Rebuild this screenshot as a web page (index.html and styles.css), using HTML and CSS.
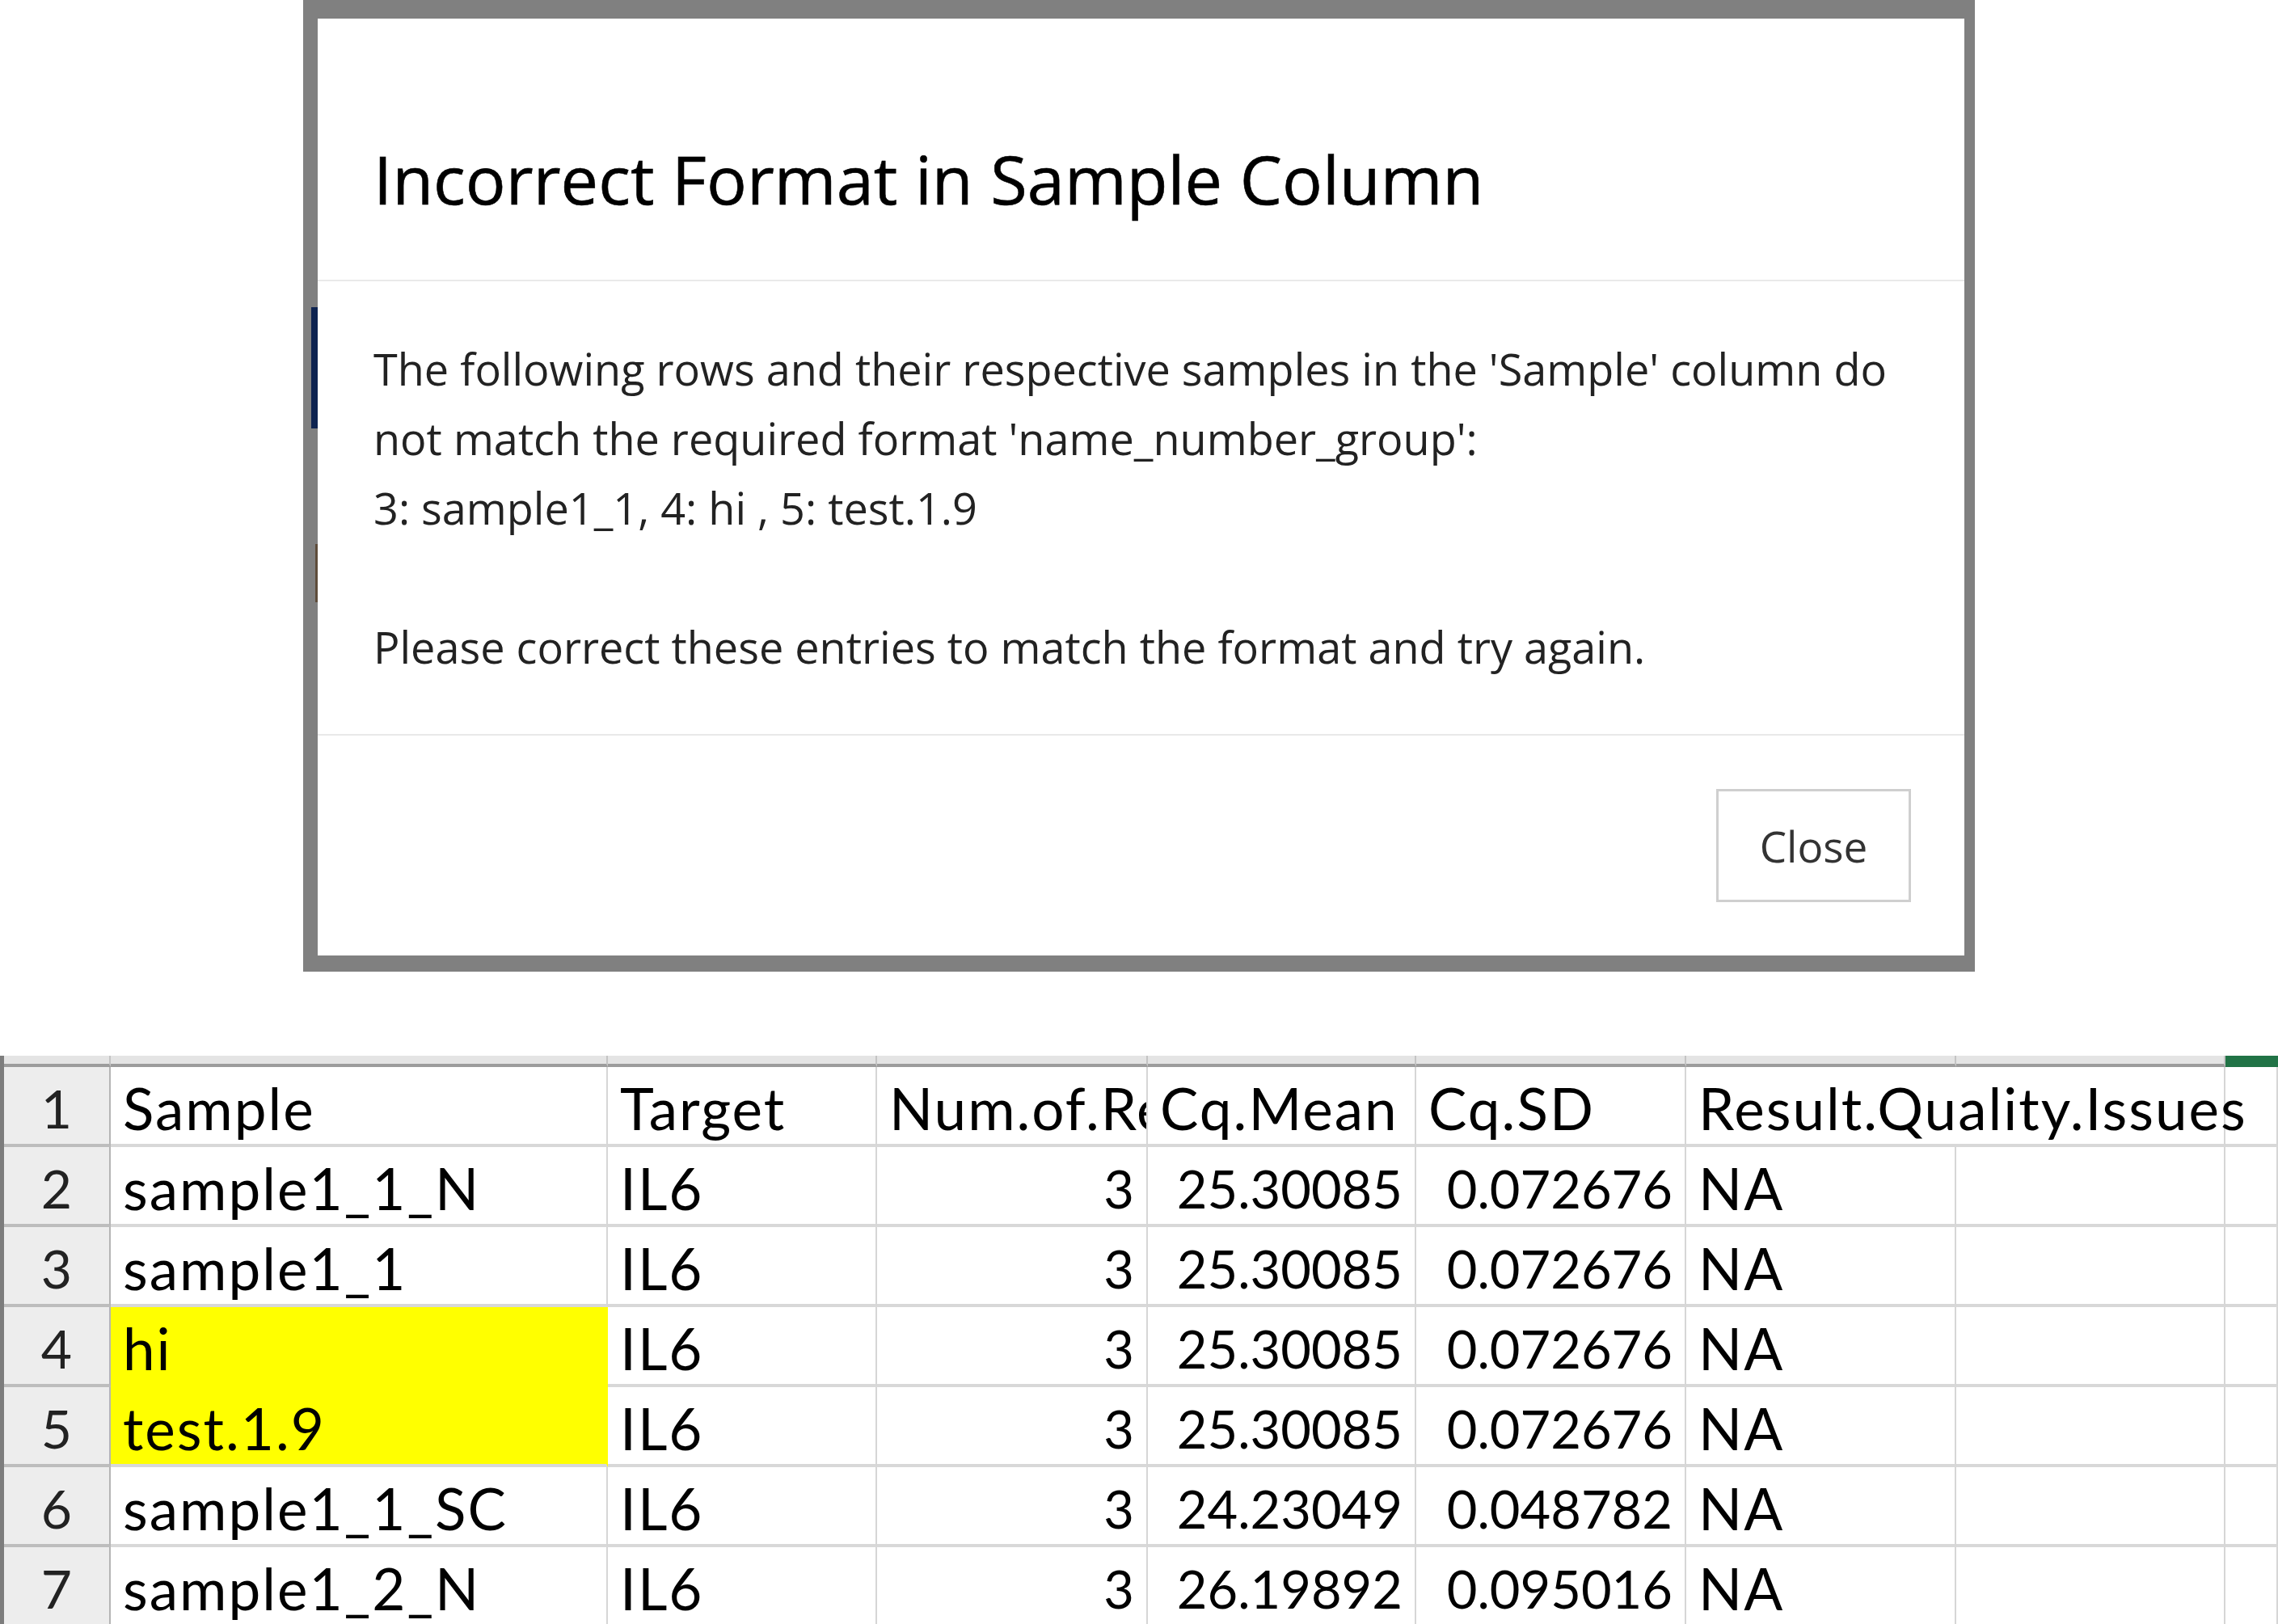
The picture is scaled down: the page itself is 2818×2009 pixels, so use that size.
FILE: index.html
```html
<!DOCTYPE html>
<html lang="en">
<head>
<meta charset="utf-8">
<title>Incorrect Format in Sample Column</title>
<link rel="stylesheet" href="styles.css">
</head>
<body>
<div class="modal-frame">
  <span class="peek peek-blue"></span>
  <span class="peek peek-brown"></span>
  <div class="modal">
    <div class="modal-header">
      <h5 class="modal-title">Incorrect Format in Sample Column</h5>
    </div>
    <div class="modal-body">
      <p>The following rows and their respective samples in the 'Sample' column do<br>not match the required format 'name_number_group':<br>3: sample1_1, 4: hi , 5: test.1.9<br><br>Please correct these entries to match the format and try again.</p>
    </div>
    <div class="modal-footer">
      <button class="btn" type="button">Close</button>
    </div>
  </div>
</div>

<div class="sheet">
  <div class="ch corner"></div><div class="ch"></div><div class="ch"></div><div class="ch"></div><div class="ch"></div><div class="ch"></div><div class="ch"></div><div class="ch"></div><div class="ch ch-sel"></div>

  <div class="rh">1</div><div class="c">Sample</div><div class="c">Target</div><div class="c clip">Num.of.Replicates</div><div class="c">Cq.Mean</div><div class="c">Cq.SD</div><div class="c span2">Result.Quality.Issues</div><div class="c"></div>

  <div class="rh">2</div><div class="c">sample1_1_N</div><div class="c">IL6</div><div class="c n">3</div><div class="c n">25.30085</div><div class="c n">0.072676</div><div class="c">NA</div><div class="c"></div><div class="c"></div>

  <div class="rh">3</div><div class="c">sample1_1</div><div class="c">IL6</div><div class="c n">3</div><div class="c n">25.30085</div><div class="c n">0.072676</div><div class="c">NA</div><div class="c"></div><div class="c"></div>

  <div class="rh">4</div><div class="c hl hl-top">hi</div><div class="c">IL6</div><div class="c n">3</div><div class="c n">25.30085</div><div class="c n">0.072676</div><div class="c">NA</div><div class="c"></div><div class="c"></div>

  <div class="rh">5</div><div class="c hl">test.1.9</div><div class="c">IL6</div><div class="c n">3</div><div class="c n">25.30085</div><div class="c n">0.072676</div><div class="c">NA</div><div class="c"></div><div class="c"></div>

  <div class="rh">6</div><div class="c">sample1_1_SC</div><div class="c">IL6</div><div class="c n">3</div><div class="c n">24.23049</div><div class="c n">0.048782</div><div class="c">NA</div><div class="c"></div><div class="c"></div>

  <div class="rh">7</div><div class="c">sample1_2_N</div><div class="c">IL6</div><div class="c n">3</div><div class="c n">26.19892</div><div class="c n">0.095016</div><div class="c">NA</div><div class="c"></div><div class="c"></div>
</div>
</body>
</html>
```

FILE: styles.css
```css
html, body {
  margin: 0;
  padding: 0;
  background: #ffffff;
  overflow: hidden;
}

/* ---------- modal ---------- */
.modal-frame {
  position: relative;
  margin-left: 375px;
  width: 2068px;
  box-sizing: border-box;
  border-style: solid;
  border-color: #808080;
  border-width: 23px 13px 20px 18px;
}

.peek {
  position: absolute;
  display: block;
}
.peek-blue {
  left: -8px;
  top: 357px;
  width: 8px;
  height: 150px;
  background: #0d2350;
}
.peek-brown {
  left: -3px;
  top: 650px;
  width: 3px;
  height: 72px;
  background: #5e4c3a;
}

.modal {
  background: #ffffff;
  font-family: "Open Sans", "Noto Sans", sans-serif;
  color: #212529;
}

.modal-header {
  padding: 150px 69px 77px;
  border-bottom: 2px solid #e9e9e9;
}

.modal-title {
  margin: 0;
  font-size: 83px;
  font-weight: 400;
  line-height: 96px;
  color: #000000;
  white-space: nowrap;
  -webkit-text-stroke: 0.6px #000000;
}

.modal-body {
  padding: 65px 69px;
}

.modal-body p {
  margin: 0;
  font-size: 54px;
  line-height: 86px;
  color: #222222;
  white-space: nowrap;
}

.modal-footer {
  display: flex;
  justify-content: flex-end;
  padding: 66px;
  border-top: 2px solid #e9e9e9;
}

.btn {
  width: 241px;
  height: 140px;
  box-sizing: border-box;
  border: 3px solid #cfcfcf;
  border-radius: 0;
  background: #ffffff;
  font-family: "Open Sans", "Noto Sans", sans-serif;
  font-size: 53px;
  color: #333333;
  padding: 0;
}

/* ---------- spreadsheet ---------- */
.sheet {
  margin-top: 104px;
  display: grid;
  grid-template-columns: 132px 615px 333px 335px 332px 334px 334px 333px 1fr;
  grid-template-rows: 14px repeat(7, 99px);
  border-left: 5px solid #7d7d7d;
  font-family: Lato, "Open Sans", sans-serif;
  font-size: 71px;
  color: #000000;
}

.ch {
  background: #e4e4e4;
  border-right: 2px solid #c4c4c4;
  border-bottom: 4px solid #9c9c9c;
  box-sizing: border-box;
}
.ch-sel {
  background: #217346;
  border-bottom-color: #217346;
  border-right: none;
}

.rh {
  display: flex;
  align-items: center;
  justify-content: center;
  padding-top: 6px;
  box-sizing: border-box;
  background: #ededed;
  border-bottom: 4px solid #bdbdbd;
  border-right: 2px solid #b5b5b5;
  color: #222222;
  font-size: 66px;
  line-height: 1.2;
}

.c {
  display: flex;
  align-items: center;
  padding: 6px 15px 0;
  box-sizing: border-box;
  border-bottom: 4px solid #d8d8d8;
  border-right: 2px solid #d6d6d6;
  white-space: nowrap;
  line-height: 1.2;
  letter-spacing: 2px;
  min-width: 0;
}

.c.n {
  justify-content: flex-end;
  padding-right: 15px;
  font-size: 65px;
  letter-spacing: 0;
}

.c.clip {
  overflow: hidden;
  padding-right: 0;
}

.c.span2 {
  grid-column: span 2;
}

.c.hl {
  background: #ffff00;
  border-right-color: #ffff00;
}
.c.hl-top {
  border-bottom-color: #ffff00;
}
```
